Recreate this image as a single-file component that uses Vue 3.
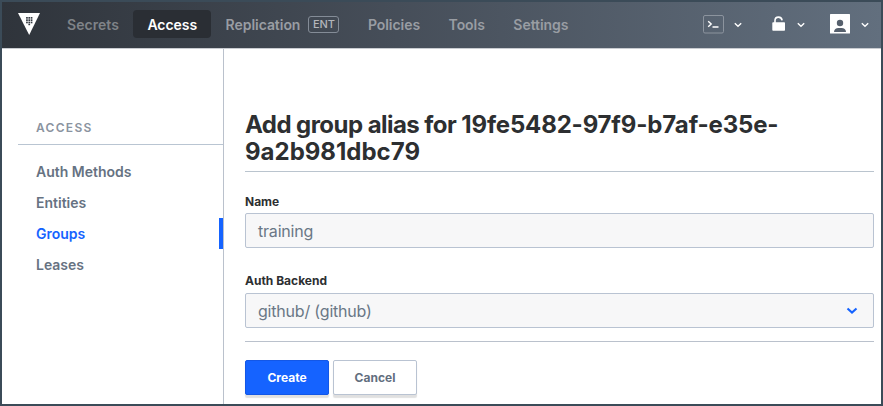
<script setup>
const nav = [
  { label: 'Secrets' },
  { label: 'Access', active: true },
  { label: 'Replication', badge: 'ENT' },
  { label: 'Policies' },
  { label: 'Tools' },
  { label: 'Settings' },
]
const side = ['Auth Methods', 'Entities', 'Groups', 'Leases']
const current = 'Groups'
</script>

<template>
  <div class="window">
    <header class="topbar">
      <svg class="logo" width="22" height="22" viewBox="0 0 22 22">
        <path d="M0 0H22L11.200 22Z" fill="#fff" />
        <g fill="#343941">
          <template v-for="r in 3" :key="r">
            <rect v-for="c in 3" :key="c" :x="5.800 + c * 2.300" :y="1.700 + r * 2.300" width="1.700" height="1.700" />
          </template>
          <rect x="10.400" y="10.700" width="1.700" height="1.500" />
        </g>
      </svg>
      <nav class="nav">
        <a v-for="n in nav" :key="n.label" class="nav-item" :class="{ active: n.active }">
          {{ n.label }}<span v-if="n.badge" class="badge">{{ n.badge }}</span>
        </a>
      </nav>
      <div class="tools">
        <div class="tool console">
          <svg width="21" height="19" viewBox="0 0 21 19" fill="none">
            <rect x=".5" y=".5" width="20" height="17.500" rx="1.500" stroke="#8c949e" />
            <path d="M5.200 6.200L8.200 9L5.200 11.800M9.500 12H15.500" stroke="#fff" stroke-width="1.400" />
          </svg>
          <svg class="chev" width="8" height="6" viewBox="0 0 8 6"><path d="M.8 1.200L4 4.200L7.200 1.200" /></svg>
        </div>
        <div class="tool seal">
          <svg width="14" height="16" viewBox="0 0 14 16" fill="none">
            <rect x=".3" y="6.200" width="12.700" height="8.500" rx=".8" fill="#fff" />
            <path d="M3 7V4.600C3 2.500 4.300 1.100 6.500 1.100C8.500 1.100 9.800 2.200 10.100 4.300" stroke="#fff" stroke-width="1.600" />
          </svg>
          <svg class="chev" width="8" height="6" viewBox="0 0 8 6"><path d="M.8 1.200L4 4.200L7.200 1.200" /></svg>
        </div>
        <div class="tool user">
          <svg width="20" height="20" viewBox="0 0 20 20">
            <rect width="20" height="19.500" rx=".5" fill="#fff" />
            <g fill="#56606d"><circle cx="10" cy="9" r="3.200" /><path d="M4 18C4 15.500 6 14.100 8.400 14.100H11.600C14 14.100 16 15.500 16 18Z" /></g>
          </svg>
          <svg class="chev" width="8" height="6" viewBox="0 0 8 6"><path d="M.8 1.200L4 4.200L7.200 1.200" /></svg>
        </div>
      </div>
    </header>
    <div class="body">
      <aside class="sidebar">
        <p class="side-title">ACCESS</p>
        <a v-for="s in side" :key="s" class="side-link" :class="{ current: s === current }">{{ s }}</a>
      </aside>
      <main class="main">
        <h1 class="title"><span class="words">Add group alias for </span><span class="ident">19fe5482-97f9-b7af-e35e-</span><br />9a2b981dbc79</h1>
        <label class="label">Name</label>
        <div class="field">training</div>
        <label class="label second">Auth Backend</label>
        <div class="field">
          <span class="select-text">github/ (github)</span>
          <svg width="12" height="8" viewBox="0 0 12 8" fill="none"><path d="M1.500 1.500L6 5.500L10.500 1.500" stroke="#1563ff" stroke-width="2.100" /></svg>
        </div>
        <div class="actions">
          <button class="btn primary">Create</button>
          <button class="btn">Cancel</button>
        </div>
      </main>
    </div>
  </div>
</template>

<style>
body { margin: 0; overflow: hidden; }
</style>

<style scoped>
.window, .window * { box-sizing: border-box; }
.window {
  width: 883px; height: 406px; border: 2px solid #3b4b58;
  background: #fff; font-family: Inter, "Liberation Sans", sans-serif;
  display: flex; flex-direction: column; overflow: hidden;
}
.topbar {
  height: 47px; flex: none; display: flex; align-items: flex-start;
  background: linear-gradient(90deg, #2f343b 0%, #464e59 45%, #626f7e 100%);
  border-bottom: 1px solid #c9ccd1; white-space: nowrap;
}
.logo { margin: 11px 0 0 16px; flex: none; }
.nav { display: flex; margin: 8px 0 0 13px; gap: .5px; }
.nav-item {
  display: flex; align-items: center; height: 28px; padding: 0 14px;
  font-size: 14px; font-weight: 600; letter-spacing: -.05px; color: #999da3; border-radius: 4px;
}
.nav-item:first-child { color: #7f8388; letter-spacing: .05px; }
.nav-item.active { background: #2a2e34; color: #fff; }
.badge {
  margin-left: 8px; width: 31px; height: 17px; border: 1px solid #848c97; border-radius: 3px;
  font-size: 11px; line-height: 15px; font-weight: 500; text-align: center; color: #b3b6bb;
}
.tools { margin-left: auto; display: flex; padding-right: 12px; }
.tool { display: flex; align-items: flex-start; }
.chev { fill: none; stroke: #fff; stroke-width: 1.400; margin-top: 20px; }
.console { width: 69px; }
.console > :first-child { margin-top: 13px; margin-right: 10px; }
.seal { width: 58px; }
.seal > :first-child { margin-top: 14px; margin-right: 11px; }
.user > :first-child { margin-top: 12px; margin-right: 11px; }
.body { display: flex; flex: 1; min-height: 0; }
.sidebar { width: 222px; padding: 70px 0 0 16px; border-right: 1px solid #bac1cc; flex: none; }
.side-title {
  margin: 0 0 11px; padding-left: 18px; height: 26px; border-bottom: 1px solid #b9c5d2;
  font-size: 12px; line-height: 18px; font-weight: 600; letter-spacing: 1.300px; color: #8a93a0;
}
.side-link {
  display: block; height: 31px; line-height: 31px; padding-left: 18px;
  font-size: 14px; font-weight: 600; color: #667282; letter-spacing: 0;
}
.side-link.current { color: #1563ff; border-right: 4px solid #1563ff; }
.main { flex: 1; padding: 62px 7px 0 21px; }
.title {
  margin: 0 0 20px; height: 61px; border-bottom: 1px solid #bac4ce;
  font-size: 24px; line-height: 27px; font-weight: 700; color: #2d2f31; white-space: nowrap;
}
.words { letter-spacing: -.55px; }
.ident { letter-spacing: -.17px; }
.label { display: block; height: 21px; line-height: 20px; font-size: 12px; font-weight: 700; color: #2d2f31; }
.second { margin-top: 23px; height: 22px; }
.field {
  display: flex; align-items: center; justify-content: space-between; height: 35px; padding: 1px 15px 0 12px;
  border: 1px solid #b9c3d2; border-radius: 2px; background: #f7f7f8;
  font-size: 16px; letter-spacing: -.2px; color: #6a7786;
}
.actions { margin-top: 13px; padding-top: 18px; border-top: 1px solid #bac1cc; display: flex; gap: 4px; }
.btn {
  width: 84px; height: 35px; padding: 0; border: 1px solid #b9c3d2; border-radius: 2px; background: #fff;
  color: #626e7e; font-family: inherit; font-size: 12px; font-weight: 700;
  box-shadow: 0 3px 1px rgba(0, 0, 0, .12);
}
.primary { background: #1563ff; border-color: #1357e6; color: #fff; }
</style>
